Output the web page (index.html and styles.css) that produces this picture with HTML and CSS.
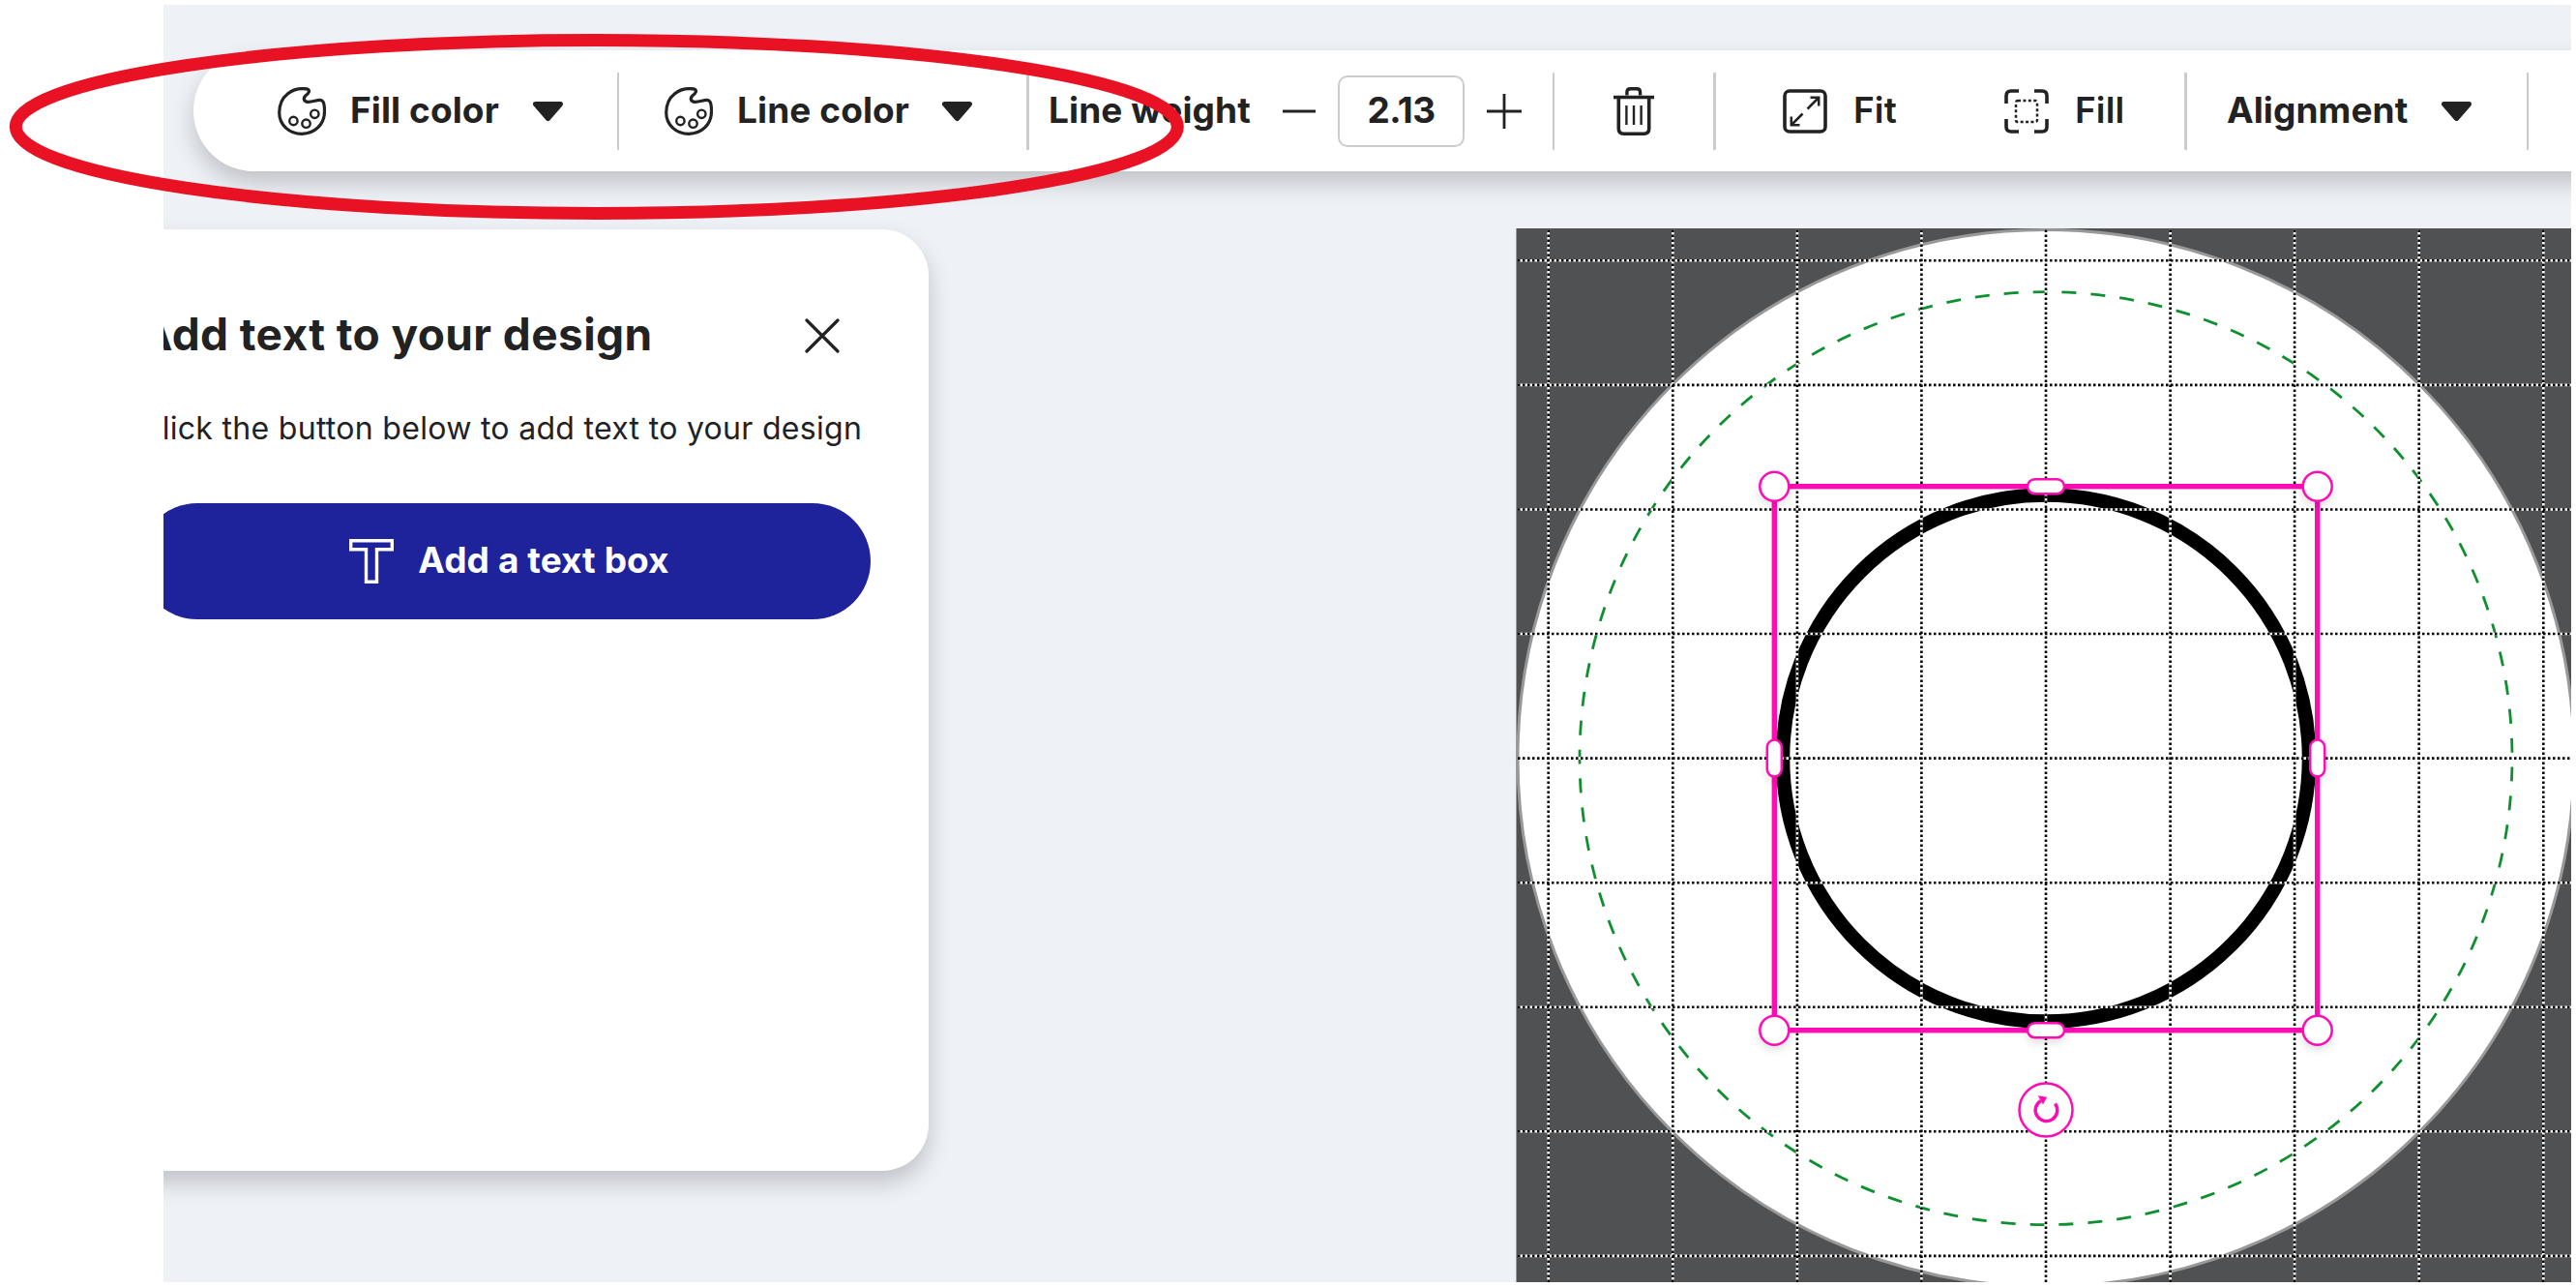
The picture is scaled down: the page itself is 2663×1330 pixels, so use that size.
FILE: index.html
```
<!doctype html>
<html lang="en">
<head>
  <meta charset="utf-8">
  <title>Design editor</title>
  <link rel="stylesheet" href="styles.css">
</head>
<body>
  <svg class="sprite">
    <symbol id="palette" viewBox="0 0 50 50">
      <path d="M30 1.9C16 -.2 1.7 8.5 1.7 26.5C1.7 39 12 48.3 25 48.3C38.5 48.3 48.5 38.5 48.5 25C48.5 20 48 16.5 46.8 14.8C44 11 37 16 30.5 15.3C26.5 14.6 26.5 11 29 8.7C32 6.5 34.5 3.2 30 1.9Z" stroke-width="3.2"/>
      <g stroke-width="2.4">
        <circle cx="16.4" cy="35" r="4.2"/>
        <circle cx="29.5" cy="37.7" r="4.2"/>
        <circle cx="38.3" cy="27.8" r="4.2"/>
      </g>
    </symbol>
    <symbol id="caret" viewBox="0 0 31 20">
      <path d="M2.5 2.5H28.5L15.5 17.5Z" fill="#222" stroke-width="5" stroke-linejoin="round"/>
    </symbol>
  </svg>

  <div class="app">
    <div class="toolbar">
      <div class="tool fill-color">
        <svg class="icon"><use href="#palette"/></svg>
        <span class="label">Fill color</span>
        <svg class="caret"><use href="#caret"/></svg>
      </div>
      <div class="divider"></div>
      <div class="tool line-color">
        <svg class="icon"><use href="#palette"/></svg>
        <span class="label">Line color</span>
        <svg class="caret"><use href="#caret"/></svg>
      </div>
      <div class="divider thick"></div>
      <div class="tool line-weight">
        <span class="label">Line weight</span>
        <div class="stepper">
          <svg width="34" height="36" viewBox="0 0 34 36"><path d="M0 18H34" stroke-width="2.8"/></svg>
          <div class="value">2.13</div>
          <svg width="36" height="36" viewBox="0 0 36 36"><path d="M0 18H36M18 0V36" stroke-width="2.8"/></svg>
        </div>
      </div>
      <div class="divider"></div>
      <div class="tool trash">
        <svg width="42" height="50" viewBox="0 0 42 50">
          <path d="M0 10.5H42" stroke-width="3.4"/>
          <path d="M13.9 8.5V5.5Q13.9 1.8 17.5 1.8H24Q27.6 1.8 27.6 5.5V8.5" stroke-width="3.4"/>
          <path d="M5.3 11V43Q5.3 48.2 10.5 48.2H31.5Q36.7 48.2 36.7 43V11" stroke-width="3.6"/>
          <path d="M13.4 19V39M21 19V39M28.6 19V39" stroke-width="2.4"/>
        </svg>
      </div>
      <div class="divider thick"></div>
      <div class="tool fit">
        <svg width="46" height="46" viewBox="0 0 46 46">
          <rect x="2" y="2" width="42" height="42" rx="5" stroke-width="3.6"/>
          <path d="M25.5 20.5L37 9M28.5 8.8H37.2V17.5M20.5 25.5L9 37M8.8 28.5V37.2H17.5" stroke-width="2.5"/>
        </svg>
        <span class="label">Fit</span>
      </div>
      <div class="tool fill">
        <svg width="46" height="46" viewBox="0 0 46 46">
          <path d="M2 15V7Q2 2 7 2H15M31 2H39Q44 2 44 7V15M44 31V39Q44 44 39 44H31M15 44H7Q2 44 2 39V31" stroke-width="3.6"/>
          <rect x="12" y="12" width="22" height="22" rx="2" stroke-width="2.5" stroke-dasharray="3 2.4"/>
        </svg>
        <span class="label">Fill</span>
      </div>
      <div class="divider thick"></div>
      <div class="tool alignment">
        <span class="label">Alignment</span>
        <svg class="caret"><use href="#caret"/></svg>
      </div>
      <div class="divider"></div>
    </div>

    <div class="workspace">
      <div class="panel">
        <div class="panel-header">
          <h2>Add text to your design</h2>
          <svg class="close" width="36" height="36" viewBox="0 0 36 36"><path d="M2 2L34 34M34 2L2 34" stroke-width="3.2" stroke-linecap="round"/></svg>
        </div>
        <p>Click the button below to add text to your design</p>
        <button class="add-text">
          <svg width="46" height="46" viewBox="0 0 46 46"><path d="M1.7 1.7H44.3V10.8H28.5V44.3H17.5V10.8H1.7Z"/></svg>
          <span>Add a text box</span>
        </button>
      </div>

      <!-- origin is the centre of the artboard -->
      <svg class="stage" width="1091" height="1089" viewBox="-548 -547.6 1091 1089">
        <defs>
          <path id="grid" d="M-514.3 -546V542M-385.7 -546V542M-257.1 -546V542M-128.6 -546V542M0 -546V542M128.6 -546V542M257.1 -546V542M385.7 -546V542M514.3 -546V542M-546 -514.3H543M-546 -385.7H543M-546 -257.1H543M-546 -128.6H543M-546 0H543M-546 128.6H543M-546 257.1H543M-546 385.7H543M-546 514.3H543"/>
        </defs>
        <rect class="outside" x="-547.5" y="-547.6" width="1091" height="1090"/>
        <circle class="artboard" r="546"/>
        <circle class="safe-area" r="482"/>
        <circle class="shape" r="272"/>
        <use href="#grid" class="grid-base"/>
        <use href="#grid" class="grid-dots"/>
        <rect class="selection" x="-280.7" y="-280.9" width="561.4" height="562"/>
        <g class="handles">
          <circle cx="-280.7" cy="-280.9" r="15"/>
          <circle cx="280.7" cy="-280.9" r="15"/>
          <circle cx="-280.7" cy="281.1" r="15"/>
          <circle cx="280.7" cy="281.1" r="15"/>
          <rect x="-19" y="-288.4" width="38" height="15" rx="7.5"/>
          <rect x="-19" y="273.6" width="38" height="15" rx="7.5"/>
          <rect x="-288.2" y="-19" width="15" height="38" rx="7.5"/>
          <rect x="273.2" y="-19" width="15" height="38" rx="7.5"/>
        </g>
        <g class="rotate" transform="translate(0 363.4)">
          <circle r="27.5"/>
          <path class="arc" d="M9.5 -6.5A11.3 11.3 0 1 1 -5 -9.6"/>
          <path class="tip" d="M-8.3 -14.7L1.2 -13.2L-3 -5.5Z"/>
        </g>
      </svg>
    </div>
  </div>

  <svg class="highlight" width="1240" height="240">
    <ellipse cx="616.8" cy="131" rx="600.5" ry="89.5"/>
  </svg>
</body>
</html>
```
FILE: styles.css
```
body {
  margin: 0;
  background: white;
  color: #222;
  font-family: 'Inter', sans-serif;
}

svg {
  display: block;
  flex-shrink: 0;
  fill: none;
  stroke: #222;
}

.sprite {
  display: none;
}

.app {
  box-sizing: border-box;
  height: 1320px;
  margin: 5px 5px 5px 169px;
  padding-top: 47px;
  overflow: hidden;
  background: #eef1f6;
}

/* Toolbar */
.toolbar {
  display: flex;
  align-items: center;
  height: 125px;
  margin: 0 -60px 0 31px;
  border-radius: 63px 0 0 63px;
  background: white;
  box-shadow: 0 12px 24px rgba(0, 0, 0, 0.2);
}

.tool {
  box-sizing: border-box;
  flex-shrink: 0;
  display: flex;
  align-items: center;
}

.label {
  padding-bottom: 2px;
  font-size: 37px;
  font-weight: 700;
  letter-spacing: 0.1px;
  white-space: nowrap;
}

.icon {
  width: 50px;
  height: 50px;
  margin-right: 25px;
}

.caret {
  width: 31px;
  height: 20px;
  margin-left: auto;
}

.divider {
  flex-shrink: 0;
  width: 2px;
  height: 80px;
  background: #ccc;
}

.divider.thick {
  width: 3px;
}

.fill-color {
  width: 438px;
  padding: 0 56px 0 87px;
}

.line-color {
  width: 421px;
  padding: 0 56px 0 47px;
}

.line-weight {
  width: 541px;
  padding: 0 32px 0 20px;
}

.stepper {
  display: flex;
  align-items: center;
  gap: 23px;
  margin-left: auto;
}

.value {
  box-sizing: border-box;
  width: 131px;
  height: 74px;
  border: 2px solid #ccc;
  border-radius: 10px;
  font-size: 37px;
  font-weight: 700;
  line-height: 68px;
  text-align: center;
  letter-spacing: -0.5px;
}

.trash {
  width: 164px;
  justify-content: center;
}

.fit {
  width: 298px;
  padding-left: 69px;
  gap: 27px;
}

.fill {
  width: 186px;
  gap: 27px;
}

.fit .label,
.fill .label {
  font-weight: 600;
}

.alignment {
  width: 351px;
  padding: 0 57px 0 41px;
}

/* Workspace */
.workspace {
  display: flex;
  align-items: flex-start;
  padding-top: 59px;
}

.panel {
  box-sizing: border-box;
  flex-shrink: 0;
  width: 876px;
  height: 973px;
  margin: 1px 607px 0 -85px;
  padding: 78px 60px 0;
  border-radius: 48px;
  background: white;
  box-shadow: 0 12px 24px rgba(0, 0, 0, 0.2);
}

.panel-header {
  display: flex;
  align-items: center;
  justify-content: space-between;
  height: 60px;
}

.panel h2 {
  margin: 0;
  font-size: 46px;
  line-height: 60px;
  letter-spacing: 0.4px;
}

.close {
  margin: 4px 32px 0 0;
}

.panel p {
  margin: 44px 0 53px;
  font-size: 32px;
  line-height: 48px;
  letter-spacing: 0.3px;
  white-space: nowrap;
}

.add-text {
  display: flex;
  align-items: center;
  justify-content: center;
  gap: 25px;
  width: 100%;
  height: 120px;
  padding: 0 0 0 9px;
  border: none;
  border-radius: 60px;
  background: #1f239b;
  color: white;
  font: 700 37px 'Inter', sans-serif;
}

.add-text svg {
  stroke: white;
  stroke-width: 3.4;
}

.add-text span {
  padding-bottom: 3px;
  letter-spacing: 0.1px;
}

/* Stage */
.stage {
  stroke: none;
}

.outside {
  fill: #505153;
}

.artboard {
  fill: white;
  stroke: #999;
  stroke-width: 3;
}

.safe-area {
  stroke: #0f9030;
  stroke-width: 2.8;
  stroke-dasharray: 15 14.98;
  stroke-dashoffset: -9;
}

.shape {
  stroke: black;
  stroke-width: 14.5;
}

.grid-base {
  stroke: white;
  stroke-width: 2.6;
}

.grid-dots {
  stroke: black;
  stroke-width: 2.6;
  stroke-dasharray: 2.5;
}

.selection {
  stroke: #ff0cb5;
  stroke-width: 5.4;
}

.handles {
  fill: white;
  stroke: #ff0cb5;
  stroke-width: 2.5;
  filter: drop-shadow(0 4px 4px rgba(0, 0, 0, 0.12));
}

.rotate {
  fill: white;
  stroke: #ff0cb5;
  stroke-width: 2.5;
}

.rotate .arc {
  fill: none;
  stroke-width: 3.4;
}

.rotate .tip {
  fill: #ff0cb5;
  stroke: none;
}

/* Red ring over the color controls */
.highlight {
  position: absolute;
  top: 0;
  left: 0;
  stroke: #e81224;
  stroke-width: 13;
}
```
